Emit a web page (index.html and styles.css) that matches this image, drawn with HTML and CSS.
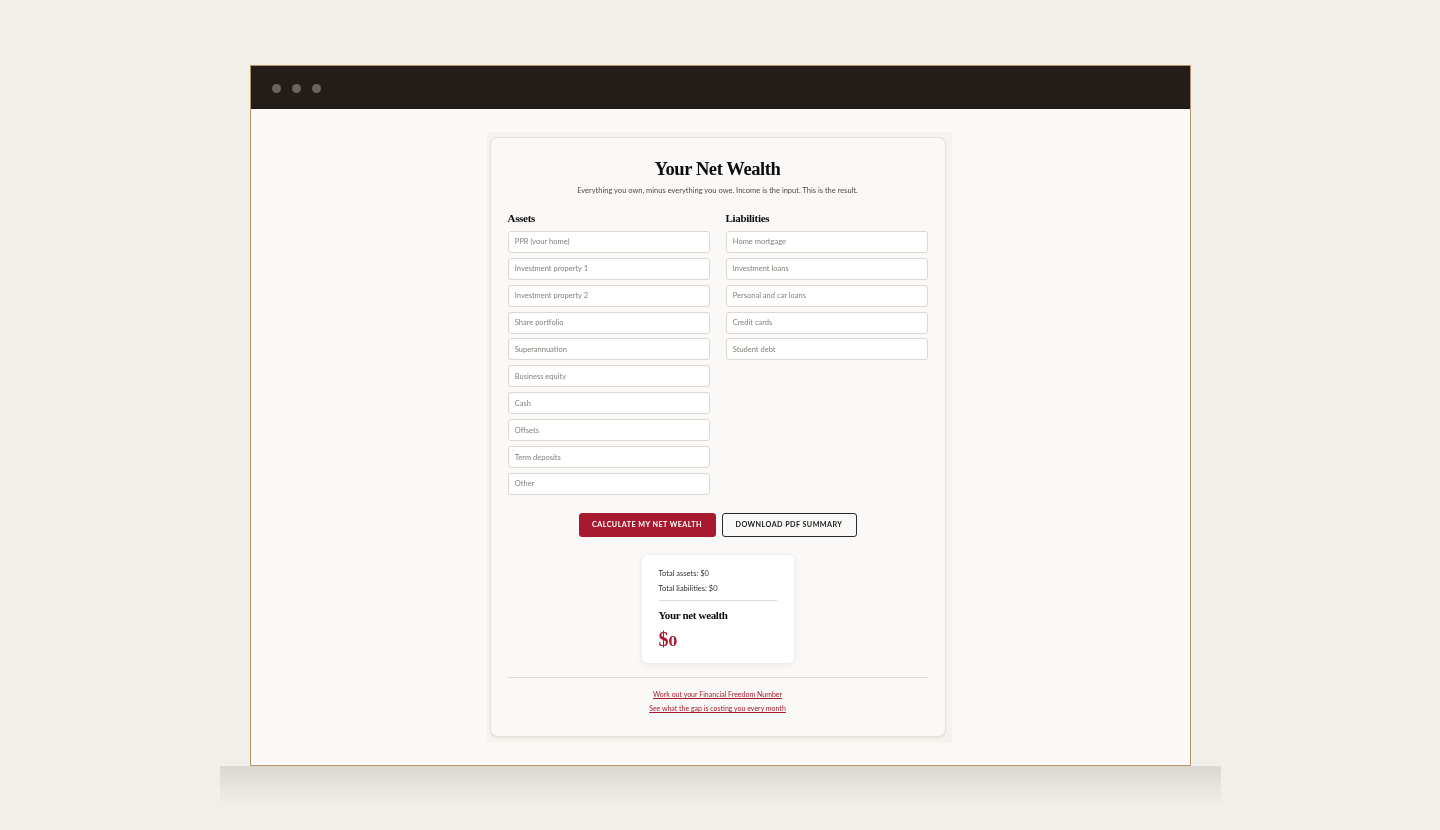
FILE: index.html
```html
<!DOCTYPE html>
<html lang="en">
<head>
<meta charset="utf-8">
<title>Your Net Wealth</title>
<link rel="stylesheet" href="styles.css">
</head>
<body>
<main class="stage">
  <div class="window">
    <div class="titlebar"><span class="dot"></span><span class="dot"></span><span class="dot"></span></div>
    <div class="viewport">
      <div class="embed">
        <section class="card">
          <h1 class="title">Your Net Wealth</h1>
          <p class="subtitle">Everything you own, minus everything you owe. Income is the input. This is the result.</p>
          <div class="columns">
            <div class="column">
              <h2 class="column-title">Assets</h2>
              <input class="field" placeholder="PPR (your home)">
              <input class="field" placeholder="Investment property 1">
              <input class="field" placeholder="Investment property 2">
              <input class="field" placeholder="Share portfolio">
              <input class="field" placeholder="Superannuation">
              <input class="field" placeholder="Business equity">
              <input class="field" placeholder="Cash">
              <input class="field" placeholder="Offsets">
              <input class="field" placeholder="Term deposits">
              <input class="field" placeholder="Other">
            </div>
            <div class="column">
              <h2 class="column-title">Liabilities</h2>
              <input class="field" placeholder="Home mortgage">
              <input class="field" placeholder="Investment loans">
              <input class="field" placeholder="Personal and car loans">
              <input class="field" placeholder="Credit cards">
              <input class="field" placeholder="Student debt">
            </div>
          </div>
          <div class="actions">
            <button class="btn btn-primary">CALCULATE MY NET WEALTH</button>
            <button class="btn btn-outline">DOWNLOAD PDF SUMMARY</button>
          </div>
          <div class="result">
            <p class="result-line">Total assets: $0</p>
            <p class="result-line">Total liabilities: $0</p>
            <hr class="result-rule">
            <h3 class="result-title">Your net wealth</h3>
            <p class="result-value">$<span class="oldstyle">0</span></p>
          </div>
          <nav class="links">
            <a class="link" href="#">Work out your Financial Freedom Number</a>
            <a class="link" href="#">See what the gap is costing you every month</a>
          </nav>
        </section>
      </div>
    </div>
  </div>
  <div class="floor"></div>
</main>
</body>
</html>
```
FILE: styles.css
```css
* { box-sizing: border-box; }
html, body { margin: 0; height: 100%; }
body {
  background: #f2efe9;
  font-family: "Lato", "Liberation Sans", sans-serif;
  color: #1a1a1a;
  overflow: hidden;
}
.stage {
  display: flex;
  flex-direction: column;
  align-items: center;
  padding-top: 65px;
  padding-left: 1px;
}
.window {
  width: 941px;
  height: 701px;
  border: 1px solid #b39468;
  background: #fbf9f7;
  display: flex;
  flex-direction: column;
}
.titlebar {
  height: 43px;
  background: #231d19;
  display: flex;
  align-items: center;
  gap: 11px;
  padding: 1px 0 0 21px;
  flex: none;
}
.dot {
  width: 9px;
  height: 9px;
  border-radius: 50%;
  background: #6a635d;
}
.viewport {
  flex: 1;
  display: flex;
  justify-content: center;
  padding-top: 22.5px;
  padding-right: 3px;
  filter: blur(0.25px);
}
.embed {
  width: 465px;
  height: 611px;
  padding: 5px 6px 5px 3px;
  background: #f5f3ee;
}
.card {
  height: 600px;
  background: #fbf9f7;
  border: 1px solid #e6e1d8;
  border-radius: 8px;
  padding: 20px 17px 0;
  box-shadow: 0 1px 2px rgba(90, 70, 40, 0.1);
}
.title {
  margin: 0;
  text-align: center;
  font-family: "Liberation Serif", serif;
  font-weight: 700;
  font-size: 18.5px;
  letter-spacing: -0.4px;
  line-height: 23px;
  color: #0c0c0c;
}
.subtitle {
  margin: 3px 0 0;
  text-align: center;
  font-size: 7.5px;
  line-height: 13px;
  color: #4f4a46;
}
.columns {
  display: grid;
  grid-template-columns: 202.5px 202.5px;
  column-gap: 15.5px;
  margin-top: 14px;
}
.column {
  display: flex;
  flex-direction: column;
  gap: 4.9px;
}
.column-title {
  margin: 0 0 1.5px;
  font-family: "Liberation Serif", serif;
  font-weight: 700;
  font-size: 11px;
  letter-spacing: -0.3px;
  line-height: 14px;
  color: #0c0c0c;
}
.field {
  display: block;
  width: 100%;
  height: 22px;
  padding: 0 6.3px;
  background: #fff;
  border: 1px solid #dcd8d0;
  border-radius: 3px;
  font-family: "Lato", sans-serif;
  font-size: 7.5px;
  outline: none;
}
.field::placeholder { color: #85807b; opacity: 1; }
.actions {
  display: flex;
  justify-content: center;
  gap: 6px;
  margin-top: 18px;
}
.btn {
  height: 24px;
  border-radius: 3px;
  font-family: "Lato", sans-serif;
  font-weight: 700;
  font-size: 7.2px;
  letter-spacing: 0.44px;
  padding: 0;
}
.btn-primary {
  width: 137px;
  background: #a6192e;
  color: #fff;
  border: 1px solid #a6192e;
}
.btn-outline {
  width: 135px;
  background: transparent;
  color: #1a1a1a;
  border: 1px solid #2a2a2a;
}
.result {
  width: 152px;
  height: 108px;
  margin: 18px auto 0;
  padding: 12.5px 17px 0;
  background: #fff;
  border-radius: 6px;
  box-shadow: 0 1px 6px rgba(60, 45, 25, 0.1);
}
.result-line {
  margin: 0 0 1.5px;
  font-size: 7.5px;
  line-height: 13px;
  color: #35312e;
}
.result-rule {
  margin: 5px 0 0;
  border: 0;
  border-top: 1px solid #dedad3;
}
.result-title {
  margin: 7.5px 0 0;
  font-family: "Liberation Serif", serif;
  font-weight: 700;
  font-size: 11px;
  letter-spacing: -0.35px;
  line-height: 14px;
  color: #0c0c0c;
}
.result-value {
  margin: 7px 0 0;
  font-family: "Liberation Serif", serif;
  font-weight: 700;
  font-size: 20px;
  line-height: 20px;
  color: #a6192e;
}
.oldstyle {
  font-family: "DejaVu Serif", serif;
  font-size: 12.5px;
}
.links {
  margin-top: 14px;
  padding-top: 10px;
  border-top: 1px solid #dedad3;
  display: flex;
  flex-direction: column;
  align-items: center;
  gap: 2px;
}
.link {
  font-size: 7px;
  line-height: 12.5px;
  color: #a6192e;
}
.floor {
  width: 1001px;
  height: 40px;
  background: linear-gradient(to bottom, #dbd8d1, #f2efe9);
}
```
